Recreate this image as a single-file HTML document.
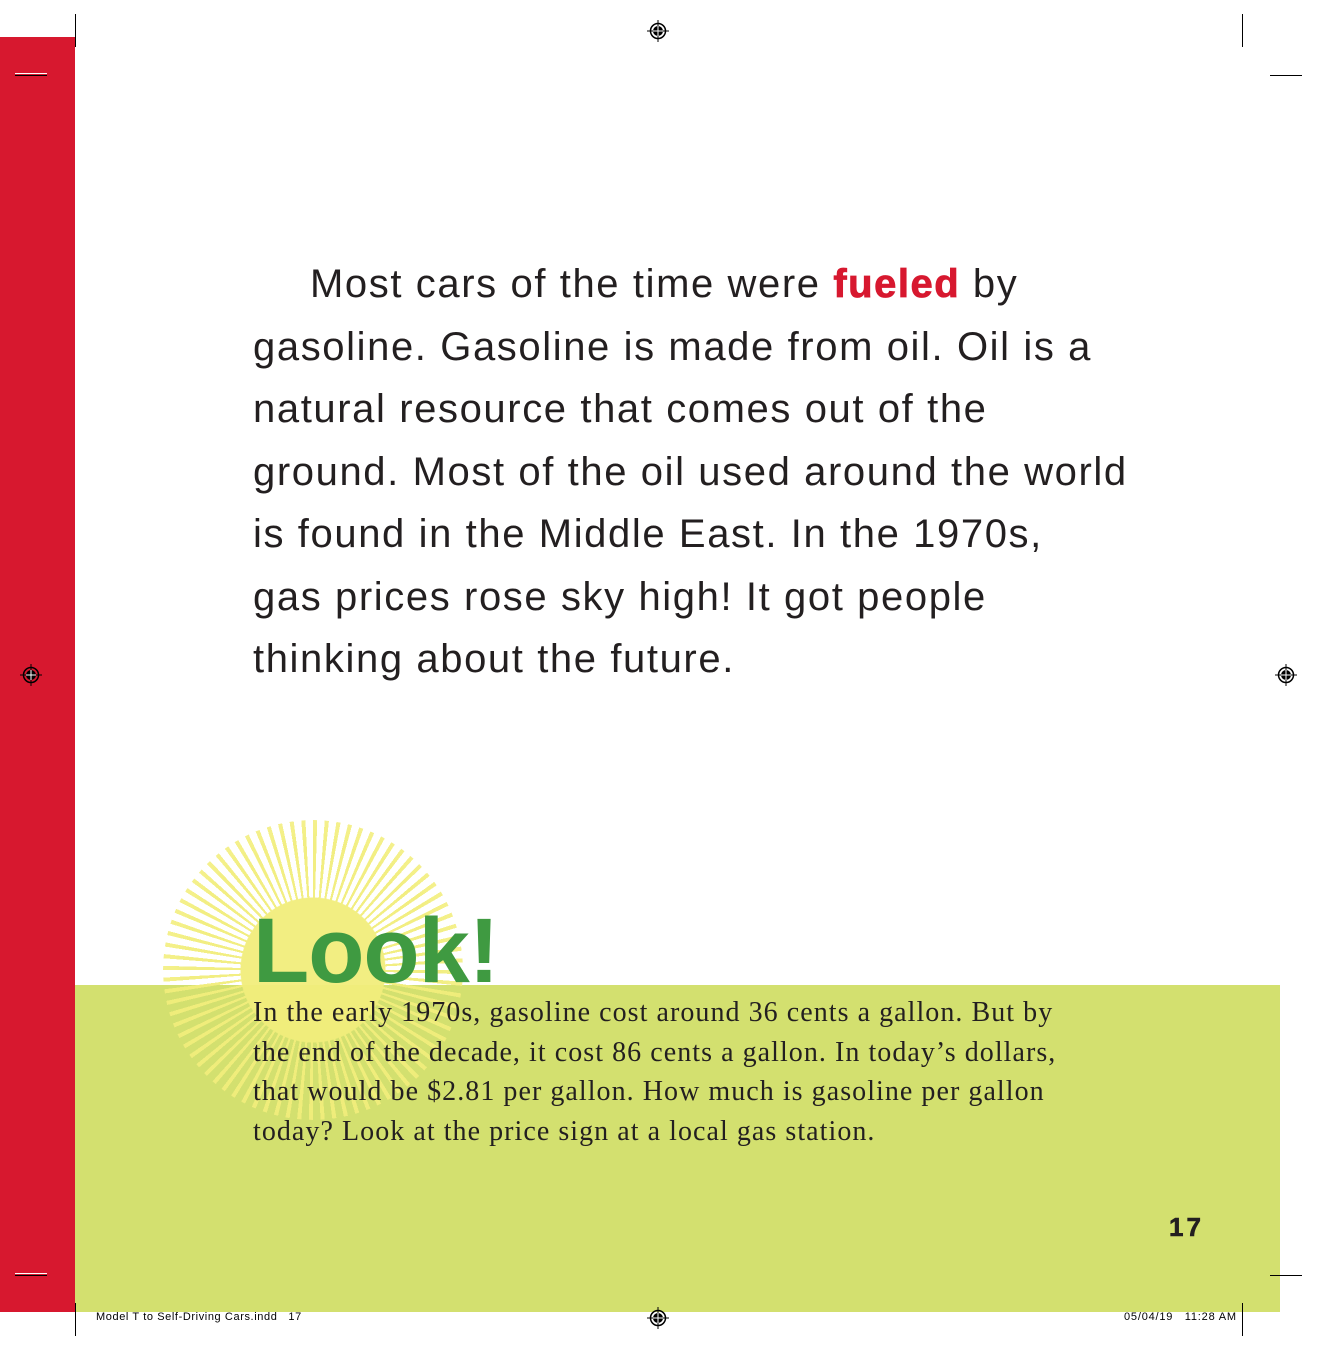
<!DOCTYPE html>
<html><head><meta charset="utf-8"><style>
html,body{margin:0;padding:0}
body{width:1317px;height:1350px;position:relative;background:#fff;overflow:hidden;font-family:"Liberation Sans",sans-serif}
.abs{position:absolute}
.red{left:0;top:37px;width:75px;height:1275px;background:#d7182f}
.green{left:75px;top:985px;width:1205px;height:327px;background:#d3e06f}
.sun{left:163px;top:820px;width:300px;height:300px;border-radius:50%;
background:radial-gradient(circle,#f2ee7c 0 72px,transparent 73px),repeating-conic-gradient(#f2ee7c 0 1.6deg,transparent 1.6deg 4.5deg);
-webkit-mask:radial-gradient(circle,#000 0 60%,rgba(0,0,0,.85) 80%,transparent 100%);mask:radial-gradient(circle,#000 0 60%,rgba(0,0,0,.85) 80%,transparent 100%);opacity:.95}
.body{left:253px;top:253px;font-size:40px;line-height:62.5px;color:#231f20;white-space:nowrap;letter-spacing:1.6px}
.body b{color:#d7182f;font-weight:bold;letter-spacing:1.5px;-webkit-text-stroke:0.8px #d7182f}
.look{left:253px;top:905px;font-size:92px;line-height:92px;font-weight:bold;color:#3f9a41;letter-spacing:-1px}
.side{left:253px;top:993px;font-family:"Liberation Serif",serif;font-size:28px;line-height:39.5px;color:#231f20;white-space:nowrap;letter-spacing:1.05px}
.pg{left:1169px;top:1212px;font-size:26px;font-weight:900;color:#231f20;letter-spacing:3px;-webkit-text-stroke:0.6px #231f20}
.foot{font-size:11px;color:#000;top:1311px}
.v{width:1px;height:33px;background:#000}
.h{height:1px;width:32px;background:#000}
.reg{width:22px;height:22px}
</style></head><body>
<div class="abs red"></div>
<div class="abs green"></div>
<div class="abs sun"></div>
<div class="abs body"><span style="display:inline-block;width:57px"></span>Most cars of the time were <b>fueled</b> by<br>gasoline. Gasoline is made from oil. Oil is a<br>natural resource that comes out of the<br>ground. Most of the oil used around the world<br>is found in the Middle East. In the 1970s,<br>gas prices rose sky high! It got people<br>thinking about the future.</div>
<div class="abs look">Look!</div>
<div class="abs side">In the early 1970s, gasoline cost around 36 cents a gallon. But by<br>the end of the decade, it cost 86 cents a gallon. In today’s dollars,<br>that would be $2.81 per gallon. How much is gasoline per gallon<br>today? Look at the price sign at a local gas station.</div>
<div class="abs pg">17</div>
<div class="abs foot" style="left:96px;letter-spacing:0.6px">Model T to Self-Driving Cars.indd&nbsp;&nbsp;&nbsp;17</div>
<div class="abs foot" style="left:1124px;letter-spacing:0.8px">05/04/19&nbsp;&nbsp;&nbsp;11:28 AM</div>
<div class="abs v" style="left:75px;top:14px"></div>
<div class="abs v" style="left:1242px;top:14px"></div>
<div class="abs v" style="left:75px;top:1303px"></div>
<div class="abs v" style="left:1242px;top:1303px"></div>
<div class="abs h" style="left:15px;top:73px;background:#fff"></div>
<div class="abs h" style="left:15px;top:75px"></div>
<div class="abs h" style="left:15px;top:1273px;background:#fff"></div>
<div class="abs h" style="left:15px;top:1275px"></div>
<div class="abs h" style="left:1270px;top:75px"></div>
<div class="abs h" style="left:1270px;top:1275px"></div>
<svg class="abs reg" style="left:647px;top:20px" viewBox="0 0 22 22"><circle cx="11" cy="11" r="7.5" fill="none" stroke="#000" stroke-width="1.5"/><circle cx="11" cy="11" r="5" fill="#000"/><path d="M11 0V22M0 11H22" stroke="#000" stroke-width="1"/><path d="M11 6V16M6 11H16" stroke="#fff" stroke-width="1"/></svg>
<svg class="abs reg" style="left:20px;top:664px" viewBox="0 0 22 22"><circle cx="11" cy="11" r="7.5" fill="none" stroke="#000" stroke-width="1.5"/><circle cx="11" cy="11" r="5" fill="#000"/><path d="M11 0V22M0 11H22" stroke="#000" stroke-width="1"/><path d="M11 6V16M6 11H16" stroke="#fff" stroke-width="1"/></svg>
<svg class="abs reg" style="left:1275px;top:664px" viewBox="0 0 22 22"><circle cx="11" cy="11" r="7.5" fill="none" stroke="#000" stroke-width="1.5"/><circle cx="11" cy="11" r="5" fill="#000"/><path d="M11 0V22M0 11H22" stroke="#000" stroke-width="1"/><path d="M11 6V16M6 11H16" stroke="#fff" stroke-width="1"/></svg>
<svg class="abs reg" style="left:647px;top:1307px" viewBox="0 0 22 22"><circle cx="11" cy="11" r="7.5" fill="none" stroke="#000" stroke-width="1.5"/><circle cx="11" cy="11" r="5" fill="#000"/><path d="M11 0V22M0 11H22" stroke="#000" stroke-width="1"/><path d="M11 6V16M6 11H16" stroke="#fff" stroke-width="1"/></svg>
</body></html>
